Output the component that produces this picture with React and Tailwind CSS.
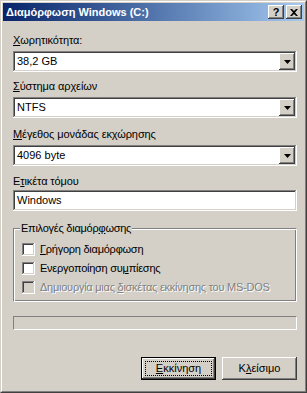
import React from "react";

const raised =
  "shadow-[inset_-1px_-1px_#404040,inset_1px_1px_#fff,inset_-2px_-2px_#808080,inset_2px_2px_#d4d0c8]";
const sunken =
  "shadow-[inset_-1px_-1px_#fff,inset_1px_1px_#808080,inset_-2px_-2px_#d4d0c8,inset_2px_2px_#404040]";

function Combo({ value }) {
  return (
    <div className={`flex h-[21px] w-[284px] bg-white p-[2px] ${sunken}`}>
      <span className="flex-1 pl-[2px] leading-[17px]">{value}</span>
      <div className={`flex h-[17px] w-[16px] items-center justify-center bg-[#d4d0c8] ${raised}`}>
        <svg width="7" height="4" viewBox="0 0 7 4">
          <polygon points="0,0 7,0 3.5,4" fill="#000" />
        </svg>
      </div>
    </div>
  );
}

function Check({ children, disabled }) {
  return (
    <div className="flex h-[13px] items-center">
      <div
        className={`h-[13px] w-[13px] ${disabled ? "bg-[#d4d0c8]" : "bg-white"} ${sunken}`}
      />
      <span
        className={`ml-[5px] leading-[13px] tracking-[-0.25px] ${
          disabled ? "text-[#808080] [text-shadow:1px_1px_0_#fff]" : ""
        }`}
      >
        {children}
      </span>
    </div>
  );
}

export default function App() {
  return (
    <div className="h-[393px] w-[307px] border border-t-[#d4d0c8] border-l-[#d4d0c8] border-b-[#404040] border-r-[#404040] bg-[#d4d0c8] font-['Liberation_Sans',Arial,sans-serif] text-[11px] text-black">
      <div className="flex h-full flex-col border border-t-white border-l-white border-b-[#808080] border-r-[#808080] p-[1px]">
        {/* title bar */}
        <div className="flex h-[18px] items-center bg-gradient-to-r from-[#0a246a] to-[#a6caf0] pl-[3px] pr-[2px]">
          <span className="flex-1 text-[11px] font-bold text-white">
            Διαμόρφωση Windows (C:)
          </span>
          <div className={`flex h-[14px] w-[16px] items-center justify-center bg-[#d4d0c8] ${raised}`}>
            <span className="text-[11px] font-bold leading-[11px]">?</span>
          </div>
          <div className={`ml-[2px] flex h-[14px] w-[16px] items-center justify-center bg-[#d4d0c8] ${raised}`}>
            <svg width="8" height="7" viewBox="0 0 8 7">
              <path d="M0 0h2l2 2 2-2h2L5 3.5 8 7H6L4 5 2 7H0l3-3.5z" fill="#000" />
            </svg>
          </div>
        </div>

        {/* content */}
        <div className="flex flex-1 flex-col pl-[10px]">
          <div className="mt-[13px] h-[13px] leading-[13px] tracking-[-0.1px]">
            <u>Χ</u>ωρητικότητα:
          </div>
          <div className="mt-[4px]">
            <Combo value="38,2 GB" />
          </div>

          <div className="mt-[8px] h-[13px] leading-[13px] tracking-[-0.1px]">
            <u>Σ</u>ύστημα αρχείων
          </div>
          <div className="mt-[4px]">
            <Combo value="NTFS" />
          </div>

          <div className="mt-[10px] h-[13px] leading-[13px] tracking-[-0.1px]">
            <u>Μ</u>έγεθος μονάδας εκχώρησης
          </div>
          <div className="mt-[4px]">
            <Combo value="4096 byte" />
          </div>

          <div className="mt-[9px] h-[13px] leading-[13px] tracking-[-0.1px]">
            Ε<u>τ</u>ικέτα τόμου
          </div>
          <div className={`mt-[2px] h-[21px] w-[284px] bg-white px-[4px] leading-[21px] ${sunken}`}>
            Windows
          </div>

          {/* options group */}
          <fieldset className="mt-[11px] h-[80px] w-[284px] border border-t-[#808080] border-l-[#808080] border-b-white border-r-white px-[8px] shadow-[inset_1px_1px_#fff,inset_-1px_-1px_#808080]">
            <legend className="ml-[-2px] bg-[#d4d0c8] px-[1px] leading-[13px] tracking-[-0.25px]">
              Επιλογές διαμόρ<u>φ</u>ωσης
            </legend>
            <div className="mt-[8px] flex flex-col gap-[6px]">
              <Check>
                <u>Γ</u>ρήγορη διαμόρφωση
              </Check>
              <Check>
                Ενεργοποίηση συ<u>μ</u>πίεσης
              </Check>
              <Check disabled>
                Δημιουργία μιας <u>δ</u>ισκέτας εκκίνησης του MS-DOS
              </Check>
            </div>
          </fieldset>

          {/* progress */}
          <div className="mt-[14px] h-[14px] w-[284px] border border-t-[#808080] border-l-[#808080] border-b-white border-r-white" />

          {/* buttons */}
          <div className="mt-[27px] flex justify-end gap-[6px] pr-[7px]">
            <button className="h-[23px] w-[75px] border border-black bg-[#d4d0c8] p-0">
              <div className={`flex h-full w-full items-center justify-center p-[3px] ${raised}`}>
                <div className="flex h-full w-full items-center justify-center border border-dotted border-black">
                  <u>Ε</u>κκίνηση
                </div>
              </div>
            </button>
            <button className={`flex h-[23px] w-[75px] items-center justify-center bg-[#d4d0c8] ${raised}`}>
              Κ<u>λ</u>είσιμο
            </button>
          </div>
        </div>
      </div>
    </div>
  );
}
